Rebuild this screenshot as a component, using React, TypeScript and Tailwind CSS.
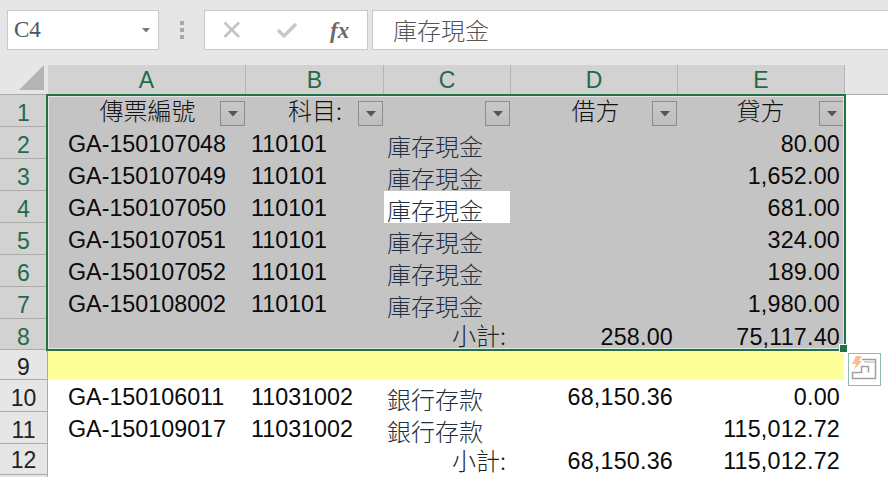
const SANS = "font-['Liberation_Sans',Arial,sans-serif]";
const CJK = "font-['Noto_Sans_CJK_TC','Noto_Sans_CJK_SC',sans-serif] font-light";

type Row = { n: number; h: string; a?: string; b?: string; c?: string; d?: string; e?: string; sub?: boolean };

const rows: Row[] = [
  { n: 2, h: "h-8", a: "GA-150107048", b: "110101", c: "庫存現金", e: "80.00" },
  { n: 3, h: "h-8", a: "GA-150107049", b: "110101", c: "庫存現金", e: "1,652.00" },
  { n: 4, h: "h-8", a: "GA-150107050", b: "110101", c: "庫存現金", e: "681.00" },
  { n: 5, h: "h-8", a: "GA-150107051", b: "110101", c: "庫存現金", e: "324.00" },
  { n: 6, h: "h-8", a: "GA-150107052", b: "110101", c: "庫存現金", e: "189.00" },
  { n: 7, h: "h-8", a: "GA-150108002", b: "110101", c: "庫存現金", e: "1,980.00" },
  { n: 8, h: "h-[31px]", c: "小計:", d: "258.00", e: "75,117.40", sub: true },
];

const lower: Row[] = [
  { n: 10, h: "h-8", a: "GA-150106011", b: "11031002", c: "銀行存款", d: "68,150.36", e: "0.00" },
  { n: 11, h: "h-8", a: "GA-150109017", b: "11031002", c: "銀行存款", e: "115,012.72" },
  { n: 12, h: "h-[31px]", c: "小計:", d: "68,150.36", e: "115,012.72", sub: true },
];

function FilterButton({ clip }: { clip?: boolean }) {
  return (
    <span
      className={`absolute right-0 top-[6px] flex h-[25px] w-[25px] items-center justify-center border border-[#8c8c8c] bg-gradient-to-b from-[#c9c9c9] to-[#bdbdbd] ${clip ? "border-r-0" : ""}`}
    >
      <svg width="10" height="6" viewBox="0 0 10 6">
        <path d="M0 0h10L5 5.5z" fill="#555" />
      </svg>
    </span>
  );
}

function Cells({ r, selected }: { r: Row; selected?: boolean }) {
  const base = `flex ${r.h} items-center text-[23.3px] text-[#0a0a0a] ${SANS}`;
  const subPad = r.n === 12 ? "pt-[3px]" : "pt-[5px]";
  const num = `${base} w-[167px] justify-end pr-[4px] tracking-[0.2px] ${r.sub ? subPad : "pt-[3px]"}`;
  return (
    <>
      <div className={`${base} w-[197px] pl-[20px] pt-[3px]`}>{r.a}</div>
      <div className={`${base} w-[138px] pl-[6px] pt-[3px]`}>{r.b}</div>
      <div
        className={`ml-[1px] flex ${r.h} w-[126px] items-center ${r.sub ? "justify-end pr-[4px] pt-[1px]" : "pl-[3px] pt-[5px]"} text-[24px] leading-none ${CJK} ${
          r.sub ? "text-[#222]" : "text-[#1f3040]"
        } ${selected && r.n === 4 ? "bg-white" : ""}`}
      >
        {r.c}
      </div>
      <div className={num}>{r.d}</div>
      <div className={num}>{r.e}</div>
    </>
  );
}

function RowHead({ n, h, selected }: { n: number; h: string; selected?: boolean }) {
  return (
    <div
      className={`flex ${h} w-[48px] shrink-0 items-center justify-center border-r border-b border-[#ababab] ${n === 12 ? "pt-[3px]" : "pt-[6px]"} text-[23px] ${SANS} ${
        selected ? "bg-[#d2d2d2] text-[#1f6b45]" : "bg-[#e6e6e6] text-[#222]"
      }`}
    >
      {n}
    </div>
  );
}

export default function App() {
  return (
    <div className={`flex h-[477px] w-[888px] flex-col overflow-hidden bg-white ${SANS}`}>
      {/* Formula bar */}
      <div className="flex h-[65px] shrink-0 items-start bg-[#e6e6e6] pl-[7px] pt-[10px]">
        <div className="flex h-[40px] w-[152px] items-center justify-between border border-[#c8c8c8] bg-white pl-[6px] pr-[8px] font-['Liberation_Serif',serif] text-[23px] text-[#4a5663]">
          <span>C4</span>
          <svg width="8" height="5" viewBox="0 0 8 5">
            <path d="M0 0h8L4 4.5z" fill="#777" />
          </svg>
        </div>
        <div className="flex w-[45px] flex-col items-center gap-[3px] pt-[11px]">
          <span className="h-[4px] w-[4px] bg-[#a8a8a8]" />
          <span className="h-[4px] w-[4px] bg-[#a8a8a8]" />
          <span className="h-[4px] w-[4px] bg-[#a8a8a8]" />
        </div>
        <div className="flex h-[40px] w-[164px] items-center border border-[#c8c8c8] bg-white">
          <svg width="18" height="18" viewBox="0 0 18 18" className="ml-[18px]">
            <path d="M1.5 1.5L16 16M16 1.5L1.5 16" stroke="#c4c4c4" strokeWidth="2.6" fill="none" />
          </svg>
          <svg width="20" height="16" viewBox="0 0 20 16" className="ml-[36px]">
            <path d="M1 8l6 6L19 2" stroke="#c8c8c8" strokeWidth="3.4" fill="none" />
          </svg>
          <span className="ml-[33px] font-['Liberation_Serif',serif] text-[23px] font-bold italic leading-none text-[#6a6a6a]">
            fx
          </span>
        </div>
        <div className={`ml-[4px] flex h-[40px] flex-1 items-center border border-r-0 border-[#c8c8c8] bg-white pl-[20px] text-[24px] text-[#555] ${CJK}`}>
          庫存現金
        </div>
      </div>

      {/* Column headers */}
      <div className="flex h-[30px] shrink-0 border-b border-[#ababab] bg-[#e6e6e6]">
        <div className="flex w-[48px] items-end justify-end pb-[4px] pr-[4px]">
          <svg width="25" height="25" viewBox="0 0 25 25">
            <path d="M25 0V25H0z" fill="#b4b4b4" />
          </svg>
        </div>
        {[
          ["A", "w-[198px]"],
          ["B", "w-[138px]"],
          ["C", "w-[127px]"],
          ["D", "w-[167px]"],
          ["E", "w-[167px]"],
        ].map(([l, w]) => (
          <div
            key={l}
            className={`flex ${w} items-center justify-center border-r border-[#b4b4b4] bg-[#d2d2d2] pt-[2px] text-[23px] text-[#1f6b45] ${SANS}`}
          >
            {l}
          </div>
        ))}
      </div>

      {/* Sheet */}
      <div className="relative flex-1">
        {/* Row 1 */}
        <div className="flex">
          <RowHead n={1} h="h-8" selected />
          <div className="flex h-8 bg-[#c4c4c4]">
            {[
              ["傳票編號", "w-[197px] pl-[2px]"],
              ["科目:", "w-[138px] pl-[2px]"],
              ["", "w-[127px]"],
              ["借方", "w-[167px] pl-[4px]"],
              ["貸方", "w-[167px]"],
            ].map(([t, w], i) => (
              <div
                key={i}
                className={`relative flex ${w} items-center justify-center pb-[3px] text-[24px] leading-none text-[#111] ${CJK}`}
              >
                {t}
                <FilterButton clip={i === 4} />
              </div>
            ))}
          </div>
        </div>

        {/* Selected rows */}
        {rows.map((r) => (
          <div key={r.n} className="flex">
            <RowHead n={r.n} h={r.h} selected />
            <div className="flex bg-[#c4c4c4]">
              <Cells r={r} selected />
            </div>
          </div>
        ))}

        {/* Row 9 */}
        <div className="flex">
          <RowHead n={9} h="h-[30px]" />
          <div className="h-[30px] w-[796px] bg-[#ffff99]" />
        </div>

        {/* Lower rows */}
        {lower.map((r) => (
          <div key={r.n} className="flex">
            <RowHead n={r.n} h={r.h} />
            <Cells r={r} />
          </div>
        ))}
        <div className="h-[2px] w-[48px] border-r border-[#ababab] bg-[#e6e6e6]" />

        {/* Selection outline */}
        <div className="pointer-events-none absolute left-[46px] top-[-1px] h-[257px] w-[800px] border-2 border-[#217346] shadow-[inset_0_0_0_1px_#e4e4e4]" />
        {/* Fill handle */}
        <div className="absolute left-[840px] top-[250px] h-[7px] w-[7px] bg-[#217346] outline outline-1 outline-white" />

        {/* Quick analysis tag */}
        <div className="absolute left-[848px] top-[258px] h-[33px] w-[33px] border border-[#8fc0a5] bg-white">
          <svg width="31" height="31" viewBox="0 0 31 31" fill="none">
            <path d="M7 2h6l-3 5h3l-8 9 2-6H3z" fill="#f6bf9a" />
            <path d="M13 5.5h13.5v19H3.5v-6h9v-6h7v6" stroke="#a0a0a0" strokeWidth="1.5" />
            <path d="M15 8h11" stroke="#bbb" strokeWidth="1.2" />
          </svg>
        </div>
      </div>
    </div>
  );
}
